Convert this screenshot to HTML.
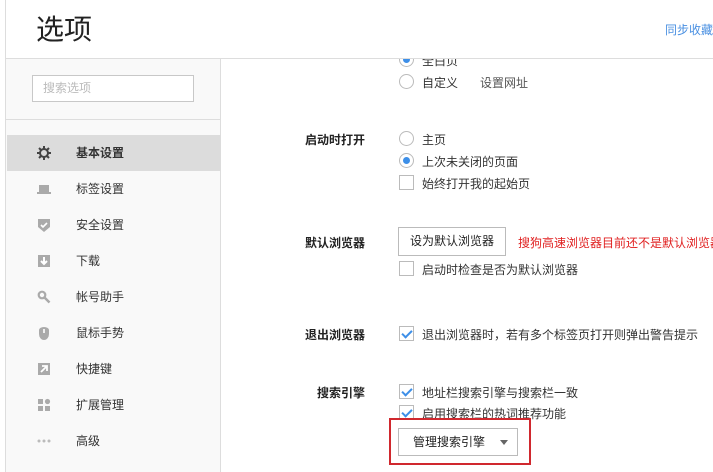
<!DOCTYPE html>
<html><head><meta charset="utf-8"><style>
*{margin:0;padding:0;box-sizing:border-box}
body{width:713px;height:472px;overflow:hidden;background:#fff;font-family:"Liberation Sans","Noto Sans CJK SC",sans-serif;font-size:12px;color:#333;position:relative}
.a{position:absolute;white-space:nowrap}
#hdr{position:absolute;left:5px;top:0;width:708px;height:59px;background:#fff;border-left:1px solid #ddd;border-bottom:1px solid #ddd;z-index:5}
#side{position:absolute;left:5px;top:59px;width:216px;height:413px;background:#f9f9f9;border-left:1px solid #ddd;border-right:1px solid #ddd}
.item{position:absolute;left:1px;width:214px;height:36px;line-height:36px;padding-left:69px;font-size:12px;color:#333}
.item.on{background:#dcdcdc;font-weight:bold}
.ic{position:absolute;left:30px;top:11px;width:14px;height:14px}
.radio{position:absolute;width:15px;height:15px;border:1px solid #bbb;border-radius:50%;background:#fff}
.radio.on::after{content:"";position:absolute;left:3px;top:3px;width:7px;height:7px;border-radius:50%;background:#3d8fe8}
.cb{position:absolute;width:15px;height:15px;border:1px solid #bbb;background:#fff}
.cb.on::after{content:"";position:absolute;left:4px;top:1px;width:4px;height:8px;border:solid #3d8fe8;border-width:0 2px 2px 0;transform:rotate(45deg)}
.lbl{position:absolute;font-weight:bold;color:#222;right:348px;text-align:right}
.btn{position:absolute;border:1px solid #bbb;background:#fff;text-align:center;color:#222}
</style></head><body>
<div id="hdr">
<div class="a" style="left:30px;top:12px;font-size:28px;color:#222;line-height:36px">选项</div>
<div class="a" style="left:659px;top:21px;color:#4a90e2;font-size:12px">同步收藏</div>
</div>
<div id="side">
<div class="a" style="left:26px;top:16px;width:162px;height:27px;border:1px solid #c8c8c8;background:#fff;color:#bbb;padding:5px 10px;line-height:15px">搜索选项</div>
<div class="a" style="left:0;top:60px;width:214px;height:1px;background:#ddd"></div>
<div class="item on" style="top:76px"><svg class="ic" viewBox="0 0 14 14"><circle cx="7" cy="7" r="4" fill="none" stroke="#444" stroke-width="2"/><g stroke="#444" stroke-width="2"><path d="M7 0v3M7 11v3M0 7h3M11 7h3M2 2l2 2M10 10l2 2M2 12l2-2M10 4l2-2"/></g></svg>基本设置</div>
<div class="item" style="top:112px"><svg class="ic" viewBox="0 0 14 14"><rect x="2" y="3" width="10" height="7" fill="#aaa"/><rect x="0" y="10" width="14" height="2" fill="#aaa"/></svg>标签设置</div>
<div class="item" style="top:148px"><svg class="ic" viewBox="0 0 14 14"><path d="M1 1h12v8l-6 5-6-5z" fill="#aaa"/><path d="M4 7l2 2 4-4" stroke="#fff" stroke-width="1.6" fill="none"/></svg>安全设置</div>
<div class="item" style="top:184px"><svg class="ic" viewBox="0 0 14 14"><rect x="1" y="1" width="12" height="12" fill="#aaa"/><path d="M7 3v7M4 7l3 3 3-3" stroke="#fff" stroke-width="2" fill="none"/></svg>下载</div>
<div class="item" style="top:220px"><svg class="ic" viewBox="0 0 14 14"><circle cx="5" cy="5" r="3.3" fill="none" stroke="#aaa" stroke-width="2.2"/><path d="M7.5 7.5l5 5" stroke="#aaa" stroke-width="2.5"/></svg>帐号助手</div>
<div class="item" style="top:256px"><svg class="ic" viewBox="0 0 14 14"><path d="M2 4a5 3 0 0 1 10 0v4a5 6 0 0 1-10 0z" fill="#aaa"/><path d="M7 3v4" stroke="#fff" stroke-width="1.6"/></svg>鼠标手势</div>
<div class="item" style="top:292px"><svg class="ic" viewBox="0 0 14 14"><rect x="1" y="1" width="12" height="12" fill="#aaa"/><path d="M4 10l6-6M5 4h5v5" stroke="#fff" stroke-width="1.8" fill="none"/></svg>快捷键</div>
<div class="item" style="top:328px"><svg class="ic" viewBox="0 0 14 14"><rect x="1" y="1" width="5" height="5" fill="#aaa"/><circle cx="10.5" cy="3.5" r="2.6" fill="#aaa"/><rect x="1" y="8" width="5" height="5" fill="#aaa"/><rect x="8" y="8" width="5" height="5" fill="#aaa"/></svg>扩展管理</div>
<div class="item" style="top:364px"><svg class="ic" viewBox="0 0 14 14"><circle cx="2" cy="7" r="1.5" fill="#bbb"/><circle cx="7" cy="7" r="1.5" fill="#bbb"/><circle cx="12" cy="7" r="1.5" fill="#bbb"/></svg>高级</div>
</div>

<div class="radio on" style="left:399px;top:52px"></div><div class="a" style="left:422px;top:52px">全白页</div>
<div class="radio" style="left:399px;top:74px"></div><div class="a" style="left:422px;top:74px">自定义</div>
<div class="a" style="left:480px;top:74px;color:#555">设置网址</div>

<div class="lbl" style="top:131px">启动时打开</div>
<div class="radio" style="left:399px;top:131px"></div><div class="a" style="left:422px;top:131px">主页</div>
<div class="radio on" style="left:399px;top:153px"></div><div class="a" style="left:422px;top:153px">上次未关闭的页面</div>
<div class="cb" style="left:399px;top:175px"></div><div class="a" style="left:422px;top:175px">始终打开我的起始页</div>

<div class="lbl" style="top:234px">默认浏览器</div>
<div class="btn" style="left:398px;top:227px;width:108px;height:29px;line-height:27px">设为默认浏览器</div>
<div class="a" style="left:518px;top:234px;color:#e02020">搜狗高速浏览器目前还不是默认浏览器</div>
<div class="cb" style="left:399px;top:261px"></div><div class="a" style="left:422px;top:261px">启动时检查是否为默认浏览器</div>

<div class="lbl" style="top:326px">退出浏览器</div>
<div class="cb on" style="left:399px;top:326px"></div><div class="a" style="left:422px;top:326px">退出浏览器时，若有多个标签页打开则弹出警告提示</div>

<div class="lbl" style="top:384px">搜索引擎</div>
<div class="cb on" style="left:399px;top:384px"></div><div class="a" style="left:422px;top:384px">地址栏搜索引擎与搜索栏一致</div>
<div class="cb on" style="left:399px;top:405px"></div><div class="a" style="left:422px;top:405px">启用搜索栏的热词推荐功能</div>
<div class="a" style="left:389px;top:418px;width:142px;height:47px;border:2px solid #d0282e"></div>
<div class="btn" style="left:398px;top:428px;width:120px;height:28px;line-height:26px;text-align:left;padding-left:14px">管理搜索引擎<span style="position:absolute;left:101px;top:11px;border:4px solid transparent;border-top:5px solid #666"></span></div>
</body></html>
